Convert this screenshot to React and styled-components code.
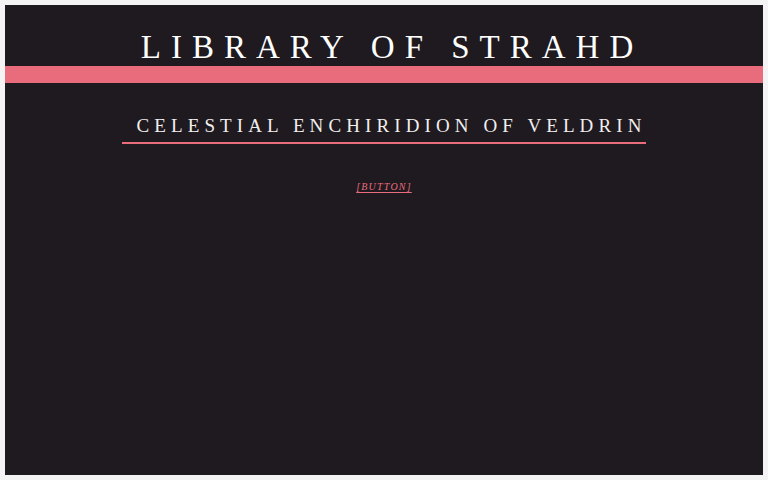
import React from "react";
import styled, { createGlobalStyle } from "styled-components";

const GlobalStyle = createGlobalStyle`
  html, body {
    margin: 0;
    padding: 0;
    background: #f4f4f4;
  }
  body {
    font-family: "Liberation Serif", "DejaVu Serif", serif;
  }
`;

// 바깥 여백
const Page = styled.div`
  padding: 5px;
`;

// 어두운 패널
const Panel = styled.div`
  height: 470px;
  background-color: #1e1a1f;
  display: flex;
  flex-direction: column;
  align-items: center;
`;

const Title = styled.h1`
  margin: 0;
  padding: 22px 0 0 16px;
  height: 39px;
  line-height: 40px;
  font-size: 33px;
  font-weight: normal;
  letter-spacing: 10px;
  color: #ffffff;
  text-align: center;
`;

const Stripe = styled.div`
  align-self: stretch;
  height: 17px;
  background-color: #e96c7d;
`;

const Subtitle = styled.h2`
  margin: 32px 0 0;
  padding: 0 0 5px 15px;
  border-bottom: 2px solid #e96c7d;
  font-size: 19px;
  line-height: 22px;
  font-weight: normal;
  letter-spacing: 5.1px;
  color: #f2eeee;
`;

const LinkButton = styled.button`
  margin-top: 37px;
  padding: 0;
  background: none;
  border: none;
  font-family: "Liberation Serif", serif;
  font-style: italic;
  font-size: 10px;
  letter-spacing: 1.2px;
  color: #e96c7d;
  text-decoration: underline;
  text-underline-offset: 2px;
  cursor: pointer;
`;

const App = () => {
  return (
    <Page>
      <GlobalStyle />
      <Panel>
        <Title>LIBRARY OF STRAHD</Title>
        <Stripe />
        <Subtitle>CELESTIAL ENCHIRIDION OF VELDRIN</Subtitle>
        <LinkButton>[BUTTON]</LinkButton>
      </Panel>
    </Page>
  );
};

export default App;
